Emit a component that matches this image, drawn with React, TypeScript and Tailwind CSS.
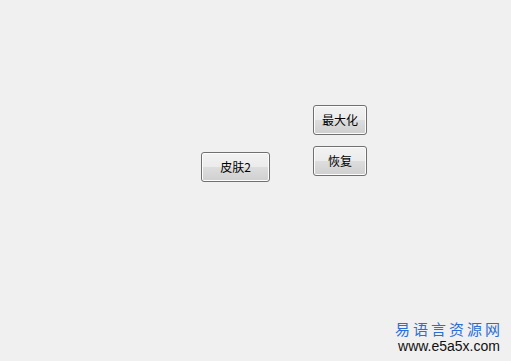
import React from 'react';

const btn =
  "h-[30px] rounded-[3px] border border-[#707070] bg-[linear-gradient(to_bottom,#f2f2f2_0%,#ebebeb_50%,#dddddd_51%,#cfcfcf_100%)] shadow-[inset_0_0_0_1px_#fcfcfc] text-[12px] leading-none text-black flex items-center justify-center";

export default function App() {
  return (
    <div
      className="w-[511px] h-[361px] bg-[#f0f0f0] flex flex-col overflow-hidden"
      style={{ fontFamily: '"Noto Sans CJK SC", "Liberation Sans", sans-serif' }}
    >
      <div className="flex pt-[105px] pl-[201px]">
        <button className={`${btn} w-[69px] mt-[47px]`}>皮肤2</button>
        <div className="flex flex-col gap-[11px] ml-[43px]">
          <button className={`${btn} w-[54px]`}>最大化</button>
          <button className={`${btn} w-[54px]`}>恢复</button>
        </div>
      </div>

      <div className="mt-auto self-end flex flex-col items-center pr-[8px] pb-[7px]">
        <span
          className="text-[15px] leading-[18px] tracking-[3px] text-[#2a6fd6]"
          style={{ fontFamily: '"Noto Sans CJK SC", serif' }}
        >
          易语言资源网
        </span>
        <span
          className="text-[14px] leading-[16px] text-[#111]"
          style={{ fontFamily: '"Liberation Sans", Arial, sans-serif' }}
        >
          www.e5a5x.com
        </span>
      </div>
    </div>
  );
}
